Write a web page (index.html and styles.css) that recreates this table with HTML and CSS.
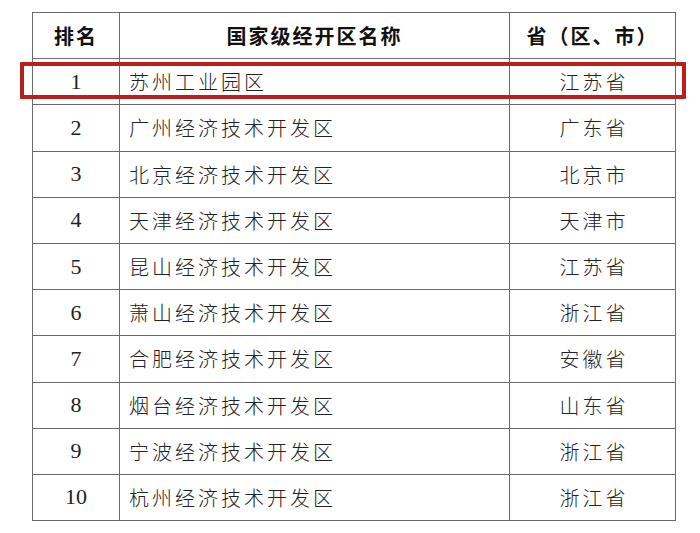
FILE: index.html
```html
<!DOCTYPE html>
<html lang="zh-CN">
<head>
<meta charset="utf-8">
<link rel="stylesheet" href="styles.css">
</head>
<body>
<div class="wrap">
  <table class="rank">
    <thead>
      <tr><th class="c-rank">排名</th><th class="c-name">国家级经开区名称</th><th class="c-prov">省（区、市）</th></tr>
    </thead>
    <tbody>
      <tr><td class="num">1</td><td class="name">苏州工业园区</td><td class="prov">江苏省</td></tr>
      <tr><td class="num">2</td><td class="name">广州经济技术开发区</td><td class="prov">广东省</td></tr>
      <tr><td class="num">3</td><td class="name">北京经济技术开发区</td><td class="prov">北京市</td></tr>
      <tr><td class="num">4</td><td class="name">天津经济技术开发区</td><td class="prov">天津市</td></tr>
      <tr><td class="num">5</td><td class="name">昆山经济技术开发区</td><td class="prov">江苏省</td></tr>
      <tr><td class="num">6</td><td class="name">萧山经济技术开发区</td><td class="prov">浙江省</td></tr>
      <tr><td class="num">7</td><td class="name">合肥经济技术开发区</td><td class="prov">安徽省</td></tr>
      <tr><td class="num">8</td><td class="name">烟台经济技术开发区</td><td class="prov">山东省</td></tr>
      <tr><td class="num">9</td><td class="name">宁波经济技术开发区</td><td class="prov">浙江省</td></tr>
      <tr><td class="num">10</td><td class="name">杭州经济技术开发区</td><td class="prov">浙江省</td></tr>
    </tbody>
  </table>
  <div class="highlight"></div>
</div>
</body>
</html>
```
FILE: styles.css
```css
html, body {
  margin: 0;
  padding: 0;
  background: #ffffff;
}
.wrap {
  position: relative;
  padding: 12px 0 0 32px;
}
.rank {
  border-collapse: collapse;
  table-layout: fixed;
  width: 643px;
  color: #222;
}
.rank th, .rank td {
  border: 1px solid #6a6a6a;
  height: 46.2px;
  padding: 0;
  box-sizing: border-box;
}
.rank th {
  font-family: "Noto Sans CJK SC", sans-serif;
  font-weight: 700;
  font-size: 20px;
  letter-spacing: 2px;
  text-align: center;
  color: #111;
}
.c-rank { width: 87px; }
.c-name { width: 390px; }
.c-prov { width: 166px; }
.rank .num {
  font-family: "Liberation Serif", serif;
  font-size: 22px;
  text-align: center;
}
.rank .name, .rank .prov {
  font-family: "Noto Sans CJK SC", sans-serif;
  font-weight: 300;
  font-size: 20px;
  letter-spacing: 3px;
}
.rank .name {
  padding-left: 9px;
}
.rank .prov {
  text-align: center;
  padding-left: 3px;
}
.highlight {
  position: absolute;
  left: 20px;
  top: 62px;
  width: 666px;
  height: 37px;
  border: 4px solid #b9201a;
  box-sizing: border-box;
  border-radius: 1px;
}
```
